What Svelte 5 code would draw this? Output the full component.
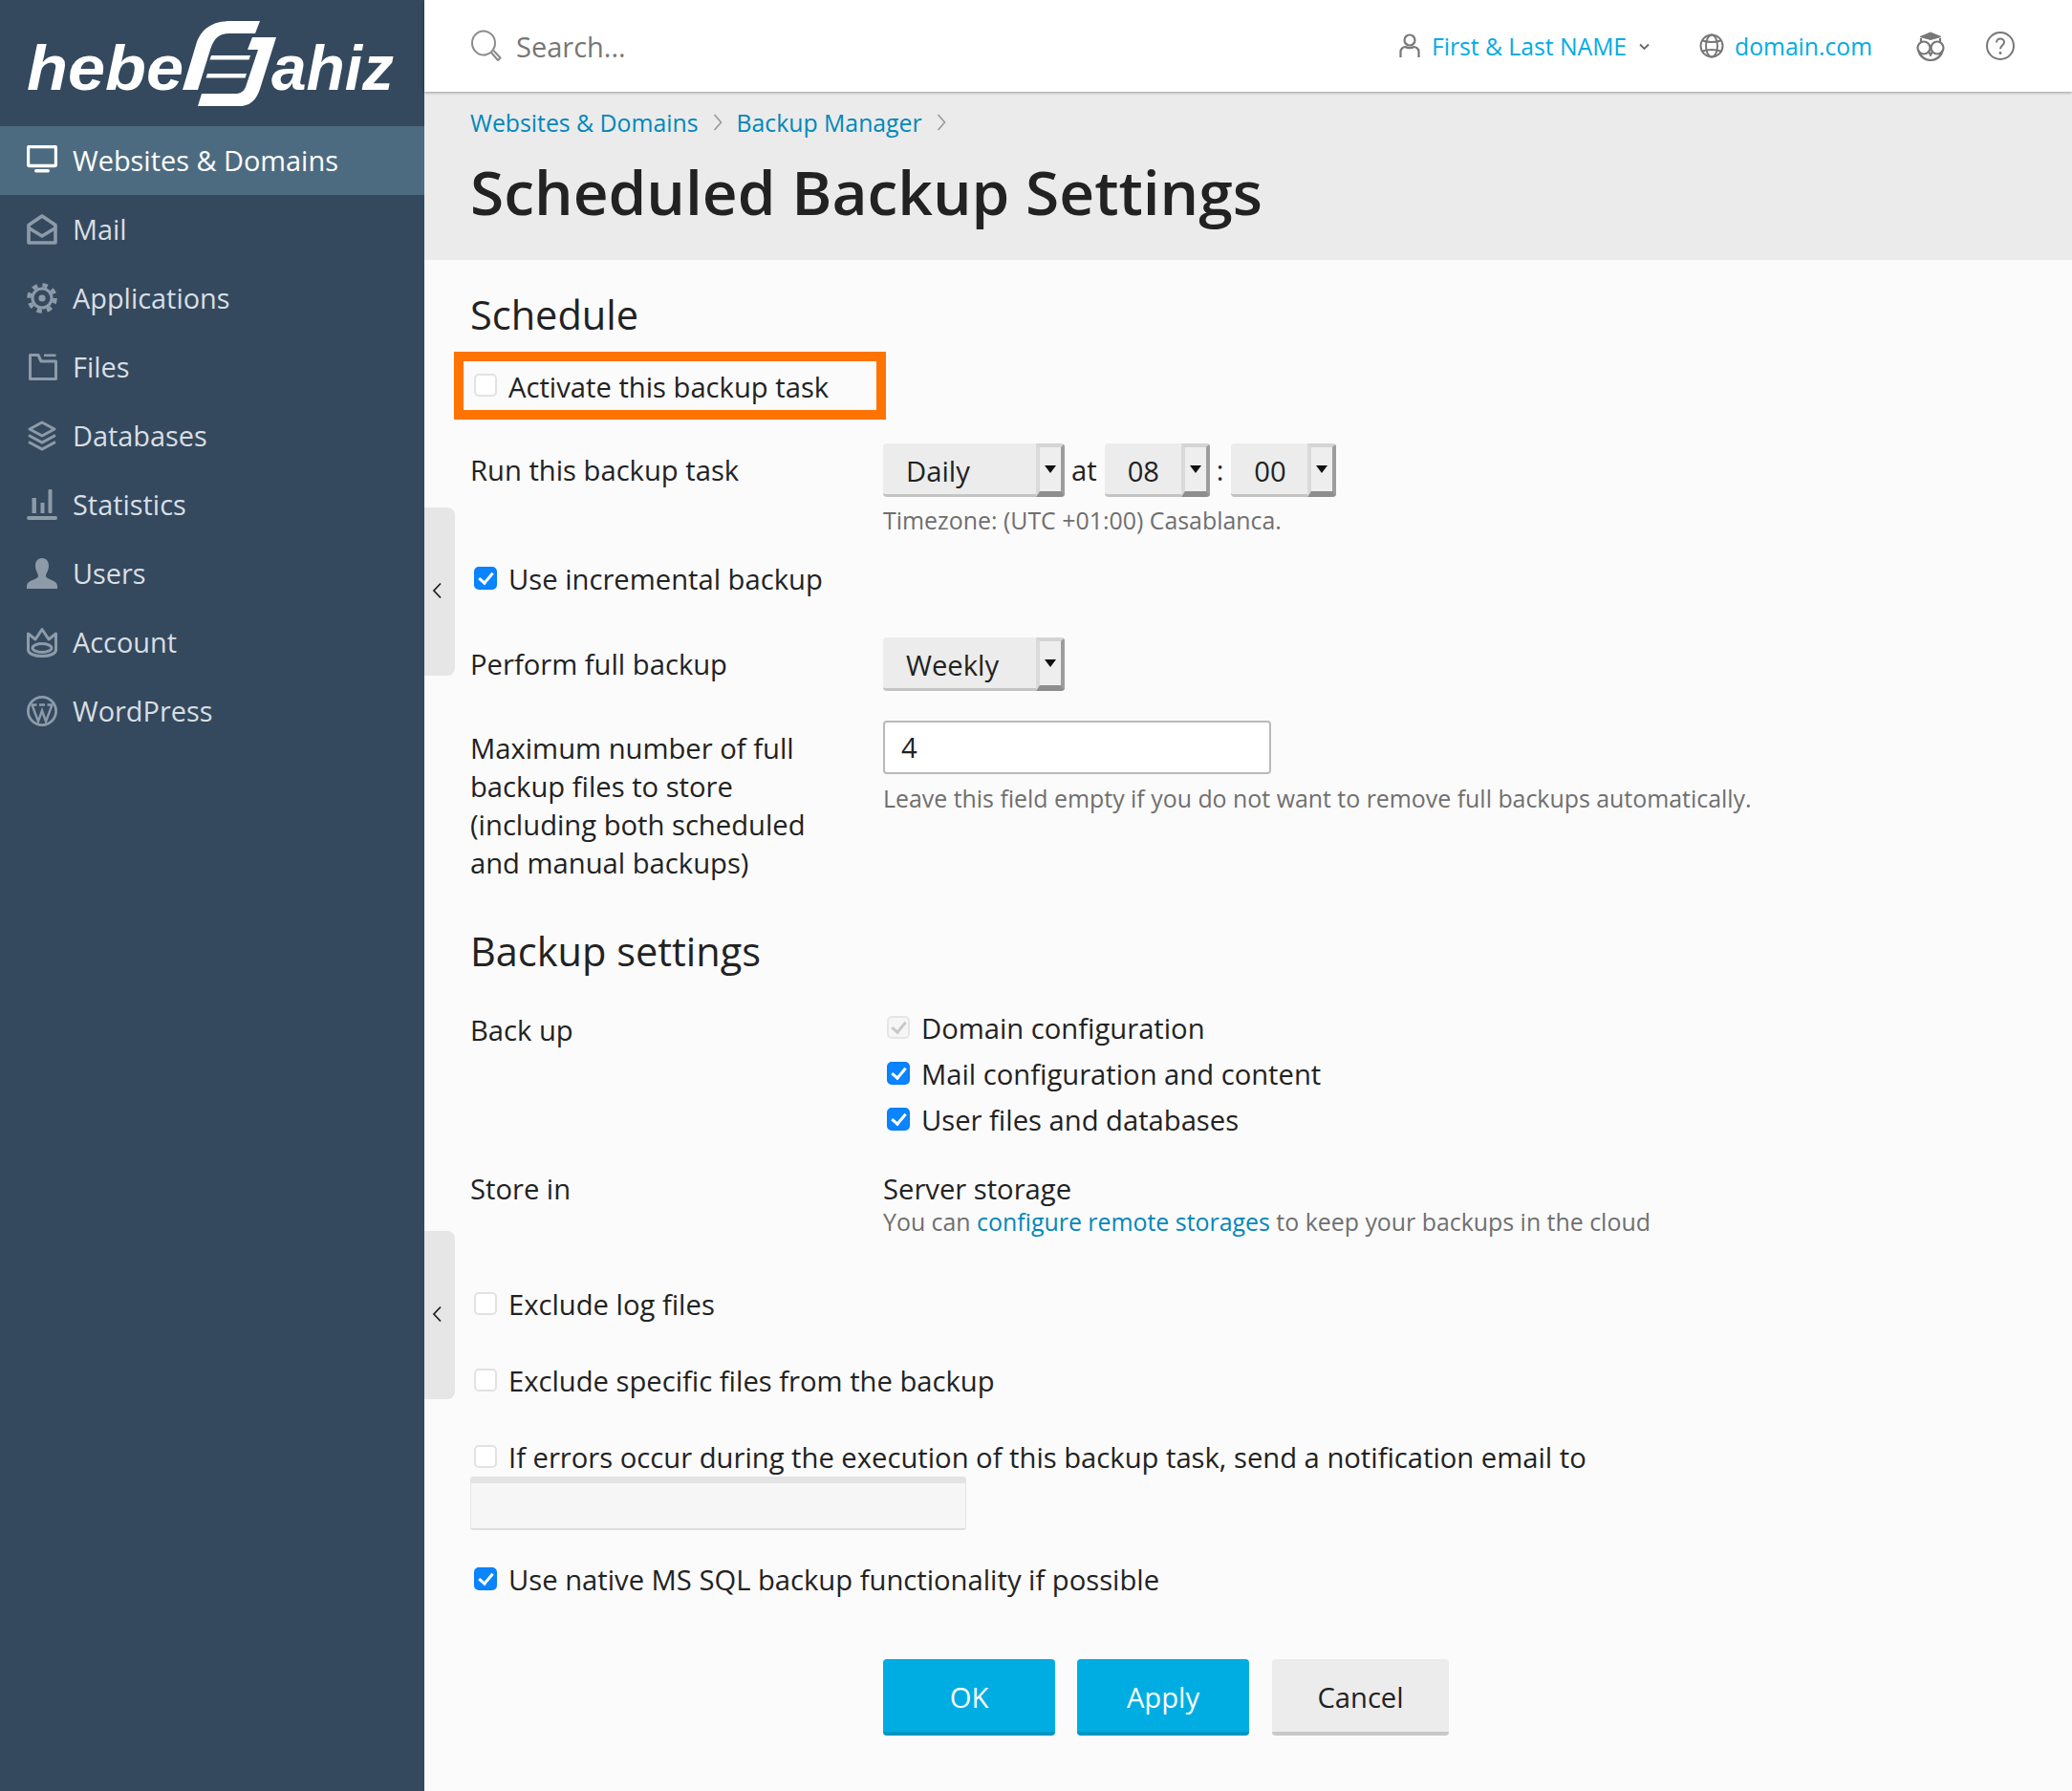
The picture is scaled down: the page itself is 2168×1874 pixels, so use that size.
<script>
  const nav = ['Websites & Domains', 'Mail', 'Applications', 'Files', 'Databases', 'Statistics', 'Users', 'Account', 'WordPress'];
</script>

{#snippet navIcon(name)}
  <svg class="nav-icon" viewBox="0 0 32 32" fill="none" stroke="currentColor" stroke-width="3">
    {#if name === 'Websites & Domains'}
      <rect x="1.5" y="1.5" width="29" height="20" rx="1.5" stroke-width="3.4" />
      <rect x="8" y="25" width="16" height="3.4" rx="1.7" fill="currentColor" stroke="none" />
    {:else if name === 'Mail'}
      <path d="M2 11.500 16 2l14 9.500V30H2z" stroke-width="3.600" stroke-linejoin="round" />
      <path d="M2 14.500 16 23l14-8.500" stroke-width="3.400" />
    {:else if name === 'Applications'}
      <circle cx="16" cy="16" r="10" />
      <circle cx="16" cy="16" r="13.6" stroke-width="4.4" stroke-dasharray="5.4 5.28" />
      <circle cx="16" cy="16" r="3.6" fill="currentColor" stroke="none" />
    {:else if name === 'Files'}
      <path d="M3.5 3.5v25h27V10H15l-3-6.5z" stroke-linejoin="round" />
      <rect x="18" y="2.5" width="12.5" height="2.6" fill="currentColor" stroke="none" />
    {:else if name === 'Databases'}
      <path d="M16 2l13 7-13 7-13-7z" stroke-linejoin="round" />
      <path d="M2 15.5l14 7.5 14-7.5" />
      <path d="M2 22.5 16 30l14-7.5" />
    {:else if name === 'Statistics'}
      <g fill="currentColor" stroke="none">
        <rect x="5.5" y="9" width="4.4" height="16" />
        <rect x="14.5" y="14" width="4" height="11" />
        <rect x="22.5" y="0" width="4" height="25" rx="1" />
        <rect x="0" y="28" width="32" height="4" rx="2" />
      </g>
    {:else if name === 'Users'}
      <path fill="currentColor" stroke="none" d="M16 0c5 0 7 4 7 8 0 5-3 8-3 11 0 3 12 4 12 10v3H0v-3c0-6 12-7 12-10 0-3-3-6-3-11 0-4 2-8 7-8z" />
    {:else if name === 'Account'}
      <path d="M1.5 7 9 13l7-10.5L23 13l7.5-6v17c0 4-6.500 6.500-14.500 6.500S1.500 28 1.500 24z" stroke-linejoin="round" />
      <ellipse cx="16" cy="22" rx="10" ry="4.500" />
    {:else}
      <circle cx="16" cy="16" r="14.600" stroke-width="2.800" />
      <path d="M5.500 9.500 12 27l4-11.500L20 27l6.500-17.500M4.500 9.500h6M13 9.500h6M21.500 9.500h6" stroke-width="2.400" />
    {/if}
  </svg>
{/snippet}

{#snippet select(value, width)}
  <div class="select" style="width: {width}px">
    <span class="select-value">{value}</span>
    <span class="select-arrow"><i></i></span>
  </div>
{/snippet}

<div class="page">
  <aside class="sidebar">
    <div class="logo">
      <svg viewBox="0 0 444 132" width="444" height="132" fill="#fff">
        <text class="logo-text" x="28" y="94" textLength="164" lengthAdjust="spacingAndGlyphs">hebe</text>
        <text class="logo-text" x="284" y="94" textLength="128" lengthAdjust="spacingAndGlyphs">ahiz</text>
        <path d="M272 22l-5 13h-27c-11 0-16 5-20 17l-13 42h-16l14-47c5-17 17-25 37-25z" />
        <path d="M264 39h25l-17 54c-4 12-10 18-22 18h-43l4-13h35c7 0 10-3 12-10l12-36h-11z" />
        <path d="M221 58h41l-1.500 4.500h-41zM217 77h41l-1.500 4.500h-41z" />
      </svg>
    </div>
    <nav>
      {#each nav as item, i}
        <div class="nav-item" class:active={i === 0}>
          {@render navIcon(item)}
          <span>{item}</span>
        </div>
      {/each}
    </nav>
  </aside>

  <div class="main">
    <header class="topbar">
      <div class="search">
        <svg width="34" height="34" viewBox="0 0 34 34" fill="none" stroke="#8a8a8a" stroke-width="2">
          <ellipse cx="14" cy="14" rx="12" ry="12.500" />
          <path d="M22 24l7 8 2.500-2.500-7-7.500" stroke-linejoin="round" />
        </svg>
        <span>Search...</span>
      </div>
      <div class="top-links">
        <svg class="user-ico" width="22" height="26" viewBox="0 0 22 26" fill="none" stroke="#777" stroke-width="2.200">
          <circle cx="11" cy="7" r="5.500" />
          <path d="M1.500 25v-6c0-3 3-5 5-5 2 1.500 6.500 1.500 9 0 2 0 5 2 5 5v6" />
        </svg>
        <span class="top-link">First &amp; Last NAME</span>
        <svg class="caret" width="11" height="8" viewBox="0 0 11 8" fill="none" stroke="#666" stroke-width="1.800"><path d="M1 1.500l4.500 4.500L10 1.500" /></svg>
        <svg class="globe" width="26" height="26" viewBox="0 0 26 26" fill="none" stroke="#777" stroke-width="2">
          <circle cx="13" cy="13" r="11.500" />
          <ellipse cx="13" cy="13" rx="6" ry="11.500" />
          <path d="M3.500 7.500c5 2 14 2 19 0M3.500 18.500c5-2 14-2 19 0" />
        </svg>
        <span class="top-link">domain.com</span>
        <svg class="owl" width="30" height="32" viewBox="0 0 30 32" fill="none" stroke="#777" stroke-width="2.200">
          <path d="M4 6.500 15 2l11 4.500-11 3z" fill="#777" stroke-width="1" />
          <path d="M5 8v5M25 8v5" />
          <circle cx="8" cy="18" r="6.500" />
          <circle cx="22" cy="18" r="6.500" />
          <path d="M2.500 21c1 6 7 10 12.500 10s11.500-4 12.500-10" />
          <path d="M13 23l2 4 2-4z" fill="#777" stroke-width="1" />
        </svg>
        <svg class="help" width="30" height="30" viewBox="0 0 30 30" fill="none" stroke="#777" stroke-width="2">
          <circle cx="15" cy="15" r="14" />
          <path d="M11 11.500c0-2.500 2-4 4-4s4 1.500 4 3.800c0 3.200-4 3.200-4 7" />
          <circle cx="15" cy="22.500" r="1.400" fill="#777" stroke="none" />
        </svg>
      </div>
    </header>

    <div class="title-band">
      <div class="crumbs">
        <a href="#top">Websites &amp; Domains</a>
        <svg width="10" height="20" viewBox="0 0 10 20" fill="none" stroke="#999" stroke-width="1.600"><path d="M1.500 2l7 8-7 8" /></svg>
        <a href="#top">Backup Manager</a>
        <svg width="10" height="20" viewBox="0 0 10 20" fill="none" stroke="#999" stroke-width="1.600"><path d="M1.500 2l7 8-7 8" /></svg>
      </div>
      <h1>Scheduled Backup Settings</h1>
    </div>

    <div class="content">
      <button class="collapse one" aria-label="Collapse">
        <svg width="10" height="18" viewBox="0 0 10 18" fill="none" stroke="#222" stroke-width="1.800"><path d="M9 1.500 2 9l7 7.500" /></svg>
      </button>
      <button class="collapse two" aria-label="Collapse">
        <svg width="10" height="18" viewBox="0 0 10 18" fill="none" stroke="#222" stroke-width="1.800"><path d="M9 1.500 2 9l7 7.500" /></svg>
      </button>

      <h2 class="first">Schedule</h2>

      <label class="check highlight"><input type="checkbox" /><span>Activate this backup task</span></label>

      <div class="row run">
        <div class="label">Run this backup task</div>
        <div class="field">
          <div class="inline">
            {@render select('Daily', 190)}
            <span class="sep at">at</span>
            {@render select('08', 110)}
            <span class="sep colon">:</span>
            {@render select('00', 110)}
          </div>
          <div class="hint tz">Timezone: (UTC +01:00) Casablanca.</div>
        </div>
      </div>

      <label class="check incr"><input type="checkbox" checked /><span>Use incremental backup</span></label>

      <div class="row full">
        <div class="label">Perform full backup</div>
        <div class="field">{@render select('Weekly', 190)}</div>
      </div>

      <div class="row max">
        <div class="label wrap">Maximum number of full backup files to store (including both scheduled and manual backups)</div>
        <div class="field">
          <div class="input">4</div>
          <div class="hint leave">Leave this field empty if you do not want to remove full backups automatically.</div>
        </div>
      </div>

      <h2 class="second">Backup settings</h2>

      <div class="row backup">
        <div class="label">Back up</div>
        <div class="field checks">
          <label class="check"><input type="checkbox" checked disabled /><span>Domain configuration</span></label>
          <label class="check"><input type="checkbox" checked /><span>Mail configuration and content</span></label>
          <label class="check"><input type="checkbox" checked /><span>User files and databases</span></label>
        </div>
      </div>

      <div class="row store">
        <div class="label">Store in</div>
        <div class="field">
          <div class="storage">Server storage</div>
          <div class="hint remote">You can <a href="#top">configure remote storages</a> to keep your backups in the cloud</div>
        </div>
      </div>

      <label class="check opt exclude"><input type="checkbox" /><span>Exclude log files</span></label>
      <label class="check opt"><input type="checkbox" /><span>Exclude specific files from the backup</span></label>
      <label class="check opt"><input type="checkbox" /><span>If errors occur during the execution of this backup task, send a notification email to</span></label>
      <div class="input disabled"></div>
      <label class="check native"><input type="checkbox" checked /><span>Use native MS SQL backup functionality if possible</span></label>

      <div class="buttons">
        <button class="btn primary ok">OK</button>
        <button class="btn primary apply">Apply</button>
        <button class="btn cancel">Cancel</button>
      </div>
    </div>
  </div>
</div>

<style>
  :global(body) {
    margin: 0;
    font-family: "Open Sans", "Noto Sans", sans-serif;
    color: #222;
  }

  .page {
    display: flex;
    width: 2168px;
    height: 1874px;
    overflow: hidden;
    background: #fbfbfb;
  }

  /* sidebar */
  .sidebar {
    flex: 0 0 444px;
    background: #34495e;
  }

  .logo {
    height: 132px;
  }

  .logo svg {
    display: block;
  }

  .logo-text {
    font-family: "Liberation Sans", sans-serif;
    font-weight: 700;
    font-style: italic;
    font-size: 66px;
  }

  .nav-item {
    display: flex;
    align-items: center;
    gap: 16px;
    height: 72px;
    padding-left: 28px;
    font-size: 28.900px;
    color: #d9dee3;
  }

  .nav-item span {
    margin-top: -2px;
  }

  .nav-item.active {
    background: #4d6b80;
    color: #fff;
  }

  .nav-icon {
    flex: 0 0 32px;
    width: 32px;
    height: 32px;
    color: #8d9ba9;
  }

  .active .nav-icon {
    color: #fff;
  }

  /* top bar */
  .main {
    flex: 1;
    min-width: 0;
    display: flex;
    flex-direction: column;
  }

  .topbar {
    position: relative;
    z-index: 2;
    flex: 0 0 96px;
    display: flex;
    align-items: center;
    justify-content: space-between;
    padding: 0 60px 0 48px;
    background: #fff;
    box-shadow: 0 1px 3px rgba(0, 0, 0, 0.35);
  }

  .search {
    display: flex;
    align-items: center;
    gap: 14px;
    font-size: 29px;
    color: #777;
  }

  .top-links {
    display: flex;
    align-items: center;
    font-size: 24.700px;
  }

  .top-link {
    color: #00ace3;
  }

  .user-ico { margin-right: 12px; }
  .caret { margin: 2px 0 0 13px; }
  .globe { margin: 0 11px 0 52px; }
  .owl { margin-left: 46px; }
  .help { margin-left: 43px; }

  /* page title */
  .title-band {
    flex: 0 0 176px;
    box-sizing: border-box;
    padding: 14px 48px 0;
    background: #ebebeb;
  }

  .crumbs {
    display: flex;
    align-items: center;
    gap: 15px;
    font-size: 24.800px;
    line-height: 36px;
  }

  a {
    color: #0087ba;
    text-decoration: none;
  }

  h1 {
    margin: 10px 0 0;
    font-size: 64px;
    font-weight: 600;
    line-height: 90px;
    color: #222;
  }

  /* form */
  .content {
    position: relative;
    flex: 1;
    padding-left: 48px;
    font-size: 29.200px;
  }

  .collapse {
    position: absolute;
    left: 0;
    width: 32px;
    height: 176px;
    padding: 0 6px 0 0;
    border: 0;
    border-radius: 0 8px 8px 0;
    background: #e6e6e6;
  }

  .collapse.one { top: 259px; }
  .collapse.two { top: 1016px; }

  h2 {
    margin: 0;
    font-size: 41.500px;
    font-weight: 500;
    line-height: 56px;
    color: #222;
  }

  h2.first { margin-top: 29px; }

  .check {
    display: flex;
    align-items: center;
    gap: 12px;
    line-height: 40px;
    padding-left: 4px;
  }

  input[type="checkbox"] {
    appearance: none;
    flex: 0 0 24px;
    width: 24px;
    height: 24px;
    margin: -3px 0 0;
    position: relative;
    box-sizing: border-box;
    border: 2px solid #e2e2e2;
    border-radius: 5px;
    background: #fff;
  }

  input[type="checkbox"]:checked {
    border-color: #0a80f8;
    background: #0a84ff;
  }

  input[type="checkbox"]:checked::after {
    content: "";
    position: absolute;
    left: 6px;
    top: 1.500px;
    width: 6px;
    height: 12px;
    border: solid #fff;
    border-width: 0 3px 3px 0;
    transform: rotate(40deg);
  }

  input[type="checkbox"]:disabled {
    border-color: #e6e6e6;
    background: #f6f6f6;
  }

  input[type="checkbox"]:disabled::after {
    border-color: #c8c8c8;
  }

  .highlight {
    box-sizing: border-box;
    width: 452px;
    height: 71px;
    margin: 11px 0 0 -17px;
    padding: 2px 0 0 11px;
    border: 10px solid #ff7300;
  }

  .row {
    display: flex;
  }

  .label {
    flex: 0 0 432px;
    line-height: 40px;
  }

  .wrap {
    box-sizing: border-box;
    padding-right: 50px;
  }

  .inline {
    display: flex;
    align-items: center;
  }

  .select {
    position: relative;
    box-sizing: border-box;
    height: 56px;
    padding-left: 24px;
    line-height: 56px;
    background: #ececec;
    border-radius: 4px;
    border-bottom: 3px solid #c4c4c4;
  }

  .select-value {
    position: relative;
    top: 1px;
  }

  .select-arrow {
    position: absolute;
    top: 0;
    right: 0;
    bottom: -3px;
    box-sizing: border-box;
    width: 30px;
    display: flex;
    justify-content: center;
    padding-top: 21px;
    background: #eee;
    border-style: solid;
    border-width: 4px 4px 6px 4px;
    border-color: #d4d4d4 #9d9d9d #8e8e8e #dadada;
    border-radius: 0 4px 4px 0;
  }

  .select-arrow i {
    width: 0;
    height: 0;
    border: 6px solid transparent;
    border-top: 8px solid #111;
    border-bottom: 0;
    margin-top: -2px;
  }

  .select + .sep {
    line-height: 56px;
  }

  .at { margin: 0 8px 0 7px; }
  .colon { margin: 0 8px 0 7px; }

  .hint {
    font-size: 24.900px;
    line-height: 36px;
    color: #6f6f6f;
  }

  .run { margin-top: 25px; }
  .run .label { padding-top: 8px; }
  .tz { margin-top: 6px; }

  .incr { margin-top: 24px; }

  .full { margin-top: 41px; }
  .full .label { padding-top: 8px; }

  .max { margin-top: 31px; }
  .max .label { padding-top: 9px; }

  .input {
    box-sizing: border-box;
    width: 406px;
    height: 56px;
    padding-left: 17px;
    line-height: 52px;
    background: #fff;
    border: 2px solid #b9b9b9;
    border-radius: 4px;
  }

  .leave { margin-top: 7px; }

  .second { margin-top: 44px; }

  .backup { margin-top: 29px; }
  .backup .label { padding-top: 6px; }
  .checks .check { height: 48px; padding-left: 4px; }

  .store { margin-top: 28px; }
  .storage { line-height: 40px; }
  .remote { margin-top: -4px; }
  .opt { height: 80px; }
  .exclude { margin-top: 29px; }

  .input.disabled {
    width: 519px;
    margin-top: -20px;
    background: #f6f6f6;
    border: 0;
    border-top: 7px solid #e3e3e3;
    border-bottom: 2px solid #dedede;
    box-shadow: inset 1px 0 0 #e6e6e6, inset -1px 0 0 #e6e6e6;
    border-radius: 3px;
  }

  .native { margin-top: 32px; }

  .buttons {
    display: flex;
    margin: 63px 0 0 432px;
  }

  .btn {
    box-sizing: border-box;
    height: 80px;
    width: 180px;
    padding: 4px 0 0;
    border: 0;
    border-radius: 4px;
    font: inherit;
  }

  .primary {
    color: #fff;
    background: #00ade3;
    border-bottom: 4px solid #0096c4;
  }

  .apply { margin-left: 23px; }

  .cancel {
    width: 185px;
    margin-left: 24px;
    color: #222;
    background: #ececec;
    border-bottom: 4px solid #c8c8c8;
  }
</style>
